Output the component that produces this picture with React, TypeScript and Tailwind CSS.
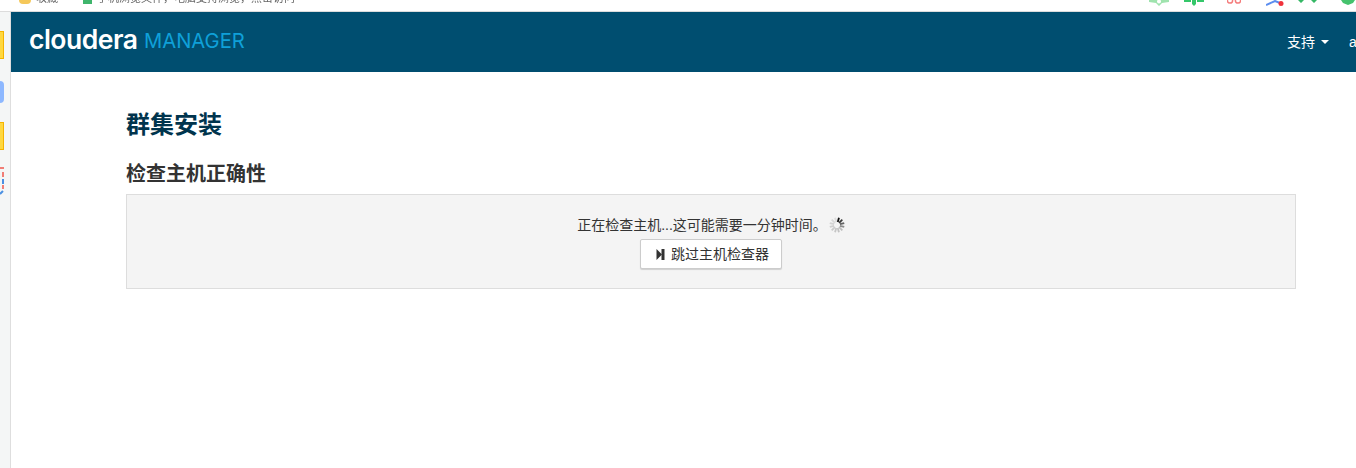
const cjk = { fontFamily: '"Liberation Sans", "Noto Sans CJK SC", sans-serif' };

const spokes = [0, 30, 60, 90, 120, 150, 180, 210, 240, 270, 300, 330];

function Spinner() {
  return (
    <svg width="16" height="16" viewBox="0 0 16 16" className="ml-[2px]">
      {spokes.map((deg, i) => (
        <rect
          key={deg}
          x="7.1"
          y="0.5"
          width="1.8"
          height="4.5"
          fill="#111"
          opacity={i < 4 ? 1 - i * 0.18 : 0.1 + (11 - i) * 0.02}
          transform={`rotate(${deg + 15} 8 8)`}
        />
      ))}
    </svg>
  );
}

function TrayIcons() {
  return (
    <div className="ml-auto flex items-start h-[11px] overflow-hidden">
      {/* book */}
      <svg width="20" height="6" viewBox="0 0 20 6">
        <path d="M0 0 H20 V2 L13 3 L10 6 L7 3 L0 2 Z" fill="#9fe3ae" />
        <circle cx="10" cy="1.5" r="2" fill="#fff" />
      </svg>
      {/* plant */}
      <svg width="20" height="6" viewBox="0 0 20 6" className="ml-[15px]">
        <path d="M0 0 H7 V2 H0 Z M13 0 H20 V2 H13 Z M8 0 H12 V4 L10 6 L8 4 Z" fill="#35c76a" />
      </svg>
      {/* scissors */}
      <svg width="14" height="4" viewBox="0 0 14 4" className="ml-[23px]">
        <circle cx="3" cy="0.5" r="2.6" fill="none" stroke="#f47c7c" strokeWidth="1.5" />
        <circle cx="11" cy="0.5" r="2.6" fill="none" stroke="#f47c7c" strokeWidth="1.5" />
      </svg>
      {/* share */}
      <svg width="19" height="6" viewBox="0 0 19 6" className="ml-[25px]">
        <path d="M0 5 L9 1 L14 3" stroke="#5b8def" strokeWidth="2" fill="none" />
        <circle cx="15" cy="3.5" r="2.5" fill="#f0323c" />
      </svg>
      {/* dots */}
      <svg width="20" height="3" viewBox="0 0 20 3" className="ml-[13px]">
        <path d="M0 0 H6 L3 3 Z M13 0 H19 L16 3 Z" fill="#35b765" />
      </svg>
      {/* shield */}
      <svg width="16" height="5" viewBox="0 0 16 5" className="ml-[22px]">
        <path d="M1 0 H15 L13 3 L8 5 L3 3 Z" fill="#45c26d" />
      </svg>
    </div>
  );
}

function BrowserStrip() {
  return (
    <div className="h-3 shrink-0 bg-white border-b border-[#dcdcdc] flex overflow-hidden">
      <div className="flex items-start pl-[19px] text-[11px] leading-none text-[#666]">
        <span className="w-3 h-[4px] bg-[#f5c85a] rounded-b-sm" />
        <span className="ml-[5px] -mt-[7px] blur-[0.4px]">收藏</span>
        <span className="ml-[25px] w-[9px] h-[4px] bg-[#3fb56c]" />
        <span className="ml-[5px] -mt-[7px] blur-[0.4px]">手机浏览文件，电脑支持浏览，点击访问</span>
      </div>
      <TrayIcons />
    </div>
  );
}

function Sidebar() {
  return (
    <div className="w-[11px] shrink-0 bg-[#f4f6f6] border-r border-[#dedede] flex flex-col items-start pt-[19px]">
      <span className="w-1 h-7 bg-[#ffd83f] border border-[#f5b400] border-l-0" />
      <span className="w-1 h-[22px] mt-[22px] bg-[#8db8ff] rounded-r-sm" />
      <span className="w-1 h-7 mt-[19px] bg-[#ffd83f] border border-[#f5b400] border-l-0" />
      <svg width="4" height="28" viewBox="0 0 4 28" className="mt-[17px]">
        <path d="M0 1 H4 M3 5 V10" stroke="#f0574c" strokeWidth="1.5" />
        <path d="M3 12 V17" stroke="#4a90e2" strokeWidth="2" />
        <path d="M3 18 V22" stroke="#f0574c" strokeWidth="1.5" />
        <path d="M0 27 L3 24" stroke="#4a90e2" strokeWidth="2" />
      </svg>
    </div>
  );
}

function Navbar() {
  return (
    <div className="h-[60px] bg-[#004e70] flex items-center overflow-hidden whitespace-nowrap">
      <span
        className="ml-[18px] w-[107px] text-white font-semibold text-[26.5px] tracking-[-0.5px] -mt-[4px]"
        style={{ fontFamily: '"Inter", sans-serif' }}
      >
        cloudera
      </span>
      <span
        className="ml-2 text-[#0fa0d9] text-[20.2px] -mt-[1px]"
        style={{ fontFamily: '"Inter", sans-serif' }}
      >
        MANAGER
      </span>
      <span className="ml-auto text-white text-[14px] flex items-center">
        支持
        <span className="ml-[6px] border-x-4 border-x-transparent border-t-4 border-t-white" />
      </span>
      <span className="ml-5 w-[7px] shrink-0 text-white text-[14px] overflow-hidden">a</span>
    </div>
  );
}

export default function App() {
  return (
    <div className="h-[468px] w-[1356px] flex flex-col overflow-hidden bg-white" style={cjk}>
      <BrowserStrip />
      <div className="flex flex-1">
        <Sidebar />
        <div className="flex-1 min-w-0">
          <Navbar />
          <div className="pl-[115px] pr-[60px]">
            <h1 className="mt-[36px] text-[24px] leading-[33px] font-bold text-[#00344d]">群集安装</h1>
            <h2 className="mt-[20px] text-[20px] leading-[27px] font-bold text-[#333]">检查主机正确性</h2>
            <div className="mt-[6px] h-[95px] bg-[#f4f4f4] border border-[#dddddd] flex flex-col items-center pt-[20px]">
              <div className="flex items-center text-[14px] leading-5 text-[#333]">
                正在检查主机...这可能需要一分钟时间。
                <Spinner />
              </div>
              <button className="mt-[4px] h-[30px] w-[142px] pl-[3px] bg-white border border-[#cccccc] rounded-[2px] shadow-[0_1px_1px_rgba(0,0,0,0.15)] flex items-center justify-center text-[14px] text-[#333]">
                <svg width="9" height="11" viewBox="0 0 9 11" className="mr-[6px]">
                  <path d="M0.5 0 L6 5.5 L0.5 11 Z" fill="#333" />
                  <rect x="5.5" y="0" width="3" height="11" fill="#333" />
                </svg>
                跳过主机检查器
              </button>
            </div>
          </div>
        </div>
      </div>
    </div>
  );
}
